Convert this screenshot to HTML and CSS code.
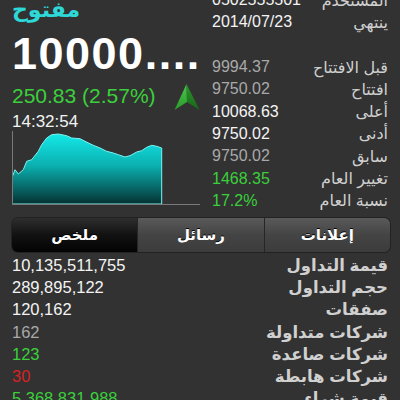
FILE: index.html
```html
<!doctype html>
<html>
<head>
    <meta charset="utf-8">
    <title>مؤشر السوق</title>
    <link rel="stylesheet" href="styles.css">
</head>
<body>

<div class="top">
    <div class="left">
        <div class="status">مفتوح</div>
        <div class="index">10000....</div>
        <div class="change">
            <span>250.83 (2.57%)</span>
            <svg class="arrow" width="26" height="28" viewBox="0 0 26 28">
                <defs>
                    <linearGradient id="arL" x1="0" y1="0" x2="0" y2="1">
                        <stop offset="0" stop-color="#4cc64c"/>
                        <stop offset="1" stop-color="#2a9a2a"/>
                    </linearGradient>
                    <linearGradient id="arR" x1="0" y1="0" x2="0" y2="1">
                        <stop offset="0" stop-color="#2c9a2c"/>
                        <stop offset="1" stop-color="#176617"/>
                    </linearGradient>
                </defs>
                <path d="M12.5 1 L0.5 27 L13 19 Z" fill="url(#arL)"/>
                <path d="M12.5 1 L25.5 27 L13 19 Z" fill="url(#arR)"/>
            </svg>
        </div>
        <div class="time">14:32:54</div>
        <svg class="chart" width="190" height="76" viewBox="0 0 190 76">
            <defs>
                <linearGradient id="fill" x1="0" y1="0" x2="0" y2="1">
                    <stop offset="0" stop-color="#14e8e8"/>
                    <stop offset="0.45" stop-color="#0bb0b0"/>
                    <stop offset="1" stop-color="#053232"/>
                </linearGradient>
            </defs>
            <path fill="url(#fill)" stroke="#7af4f4" stroke-width="1"
                  d="M0.5 45.3 L3 38.7 L6.3 43 L11.3 38.7 L14.7 30.3 L19.7 28.7 L26.3 20.3 L29.7 13.7 L34.7 7 L39.7 3.7 L46.3 3 L54.7 4.7 L59.7 7 L68 7.7 L73 10.3 L81.3 14.3 L88 17 L94.7 20.3 L101.3 22 L106.3 23.7 L113 26 L118 24.7 L124.7 21 L129.7 19.7 L134.7 16.3 L139.7 14.3 L144.7 15.3 L149.7 17 L149.7 73 L0.5 73 Z"/>
            <path d="M0.5 0 L0.5 73.5 L188 73.5" fill="none" stroke="#7a7a7a" stroke-width="1"/>
        </svg>
    </div>

    <ul class="stats">
        <li><span class="white">0502555501</span><span>المستخدم</span></li>
        <li><span class="white">2014/07/23</span><span>ينتهي</span></li>
        <li></li>
        <li><span class="gray">9994.37</span><span>قبل الافتتاح</span></li>
        <li><span class="gray">9750.02</span><span>افتتاح</span></li>
        <li><span class="white">10068.63</span><span>أعلى</span></li>
        <li><span class="white">9750.02</span><span>أدنى</span></li>
        <li><span class="gray">9750.02</span><span>سابق</span></li>
        <li><span class="green">1468.35</span><span>تغيير العام</span></li>
        <li><span class="green">17.2%</span><span>نسبة العام</span></li>
    </ul>
</div>

<div class="tabs">
    <div class="tab selected">ملخص</div>
    <div class="tab">رسائل</div>
    <div class="tab">إعلانات</div>
</div>

<ul class="stats summary">
    <li><span class="white">10,135,511,755</span><span>قيمة التداول</span></li>
    <li><span class="white">289,895,122</span><span>حجم التداول</span></li>
    <li><span class="white">120,162</span><span>صفقات</span></li>
    <li><span class="gray">162</span><span>شركات متداولة</span></li>
    <li><span class="green">123</span><span>شركات صاعدة</span></li>
    <li><span class="red">30</span><span>شركات هابطة</span></li>
    <li><span class="green">5,368,831,988</span><span>قيمة شراء</span></li>
</ul>

</body>
</html>
```

FILE: styles.css
```css
html { font-family: "Liberation Sans", "DejaVu Sans", sans-serif; }
body {
    margin: 0;
    background: #323232;
    color: #f2f2f2;
    overflow: hidden;
}

.top {
    display: grid;
    grid-template-columns: 188px 1fr;
    column-gap: 12px;
    padding: 0 12px;
    margin-top: -11px;
}

.status {
    height: 43px;
    line-height: 42px;
    font-size: 22px;
    font-weight: bold;
    color: #2fd8d8;
}
.index {
    font-size: 45px;
    line-height: 44px;
    font-weight: bold;
    letter-spacing: 1.5px;
    color: #fff;
    white-space: nowrap;
}
.change {
    display: flex;
    justify-content: space-between;
    align-items: flex-start;
    margin-top: 7px;
    font-size: 21px;
    line-height: 26px;
    color: #3bd03b;
}
.time {
    margin-top: 2px;
    font-size: 17px;
    line-height: 18px;
}
.chart { display: block; }

.stats {
    list-style: none;
    margin: 0;
    padding: 0;
    font-size: 16px;
}
.stats li {
    display: flex;
    justify-content: space-between;
    align-items: center;
    height: 22.3px;
}
.stats li span:last-child { color: #d0d0d0; }

.white { color: #f4f4f4; }
.gray { color: #a9a9a9; }
.green { color: #3bd03b; }
.red { color: #d22424; }

.tabs {
    display: flex;
    margin: 6px 10px 2px 12px;
    height: 34px;
    border-radius: 6px;
    overflow: hidden;
    box-shadow: 0 0 0 1px #222;
}
.tab {
    flex: 1;
    display: flex;
    align-items: center;
    justify-content: center;
    font-size: 15px;
    font-weight: bold;
    color: #fff;
    text-shadow: 0 -1px 0 #000;
    background: linear-gradient(#5a5a5a, #444 50%, #3c3c3c);
    border-left: 1px solid #262626;
}
.tab:first-child { border-left: none; }
.tab.selected { background: linear-gradient(#2e2e2e, #121212 50%, #030303); }

.summary { padding: 0 12px; font-size: 16.5px; }
.summary li span:last-child { font-weight: bold; }
```
